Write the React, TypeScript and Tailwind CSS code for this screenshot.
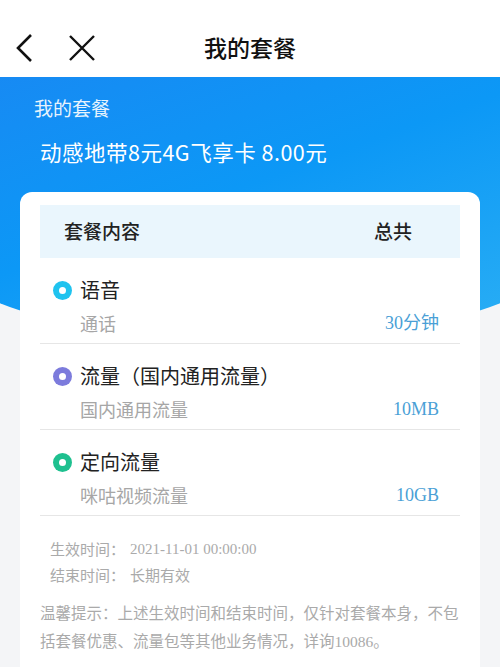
const rows = [
  { title: "语音", sub: "通话", value: "30分钟", dot: "bg-[#1fc3ef]" },
  { title: "流量（国内通用流量）", sub: "国内通用流量", value: "10MB", dot: "bg-[#7c7bdc]" },
  { title: "定向流量", sub: "咪咕视频流量", value: "10GB", dot: "bg-[#1ec08f]" },
];

const serif = "font-['Liberation_Serif','Noto_Sans_CJK_SC',serif]";

export default function App() {
  return (
    <div className="min-h-screen bg-[#f4f5f7] font-['Noto_Sans_CJK_SC','Noto_Sans',sans-serif] overflow-hidden">
      {/* nav bar */}
      <header className="relative flex h-[77px] items-center bg-white pt-[18px]">
        <div className="flex items-center gap-[34px] pl-[14px]">
          <svg width="20" height="30" viewBox="0 0 20 30" fill="none">
            <path d="M17 2 L4 15 L17 28" stroke="#111" strokeWidth="2.6" />
          </svg>
          <svg width="28" height="26" viewBox="0 0 28 26" fill="none">
            <path d="M2 1 L26 25 M26 1 L2 25" stroke="#111" strokeWidth="2.4" />
          </svg>
        </div>
        <h1 className="absolute left-1/2 top-[32px] -translate-x-1/2 text-[23px] leading-[30px] font-medium text-[#111]">
          我的套餐
        </h1>
      </header>

      <main className="relative">
        {/* curved blue backdrop */}
        <div className="absolute left-[-50px] top-0 h-[262px] w-[600px] rounded-b-[50%_80px] bg-[linear-gradient(160deg,#1889f3_0%,#0c98f6_45%,#2cb0f4_100%)]" />

        <div className="relative px-[34px] pt-[18px] text-white">
          <p className="text-[19px] leading-[26px] opacity-90">我的套餐</p>
          <p className="mt-4 pl-[6px] text-[21.5px] leading-[30px] tracking-[0.5px]">动感地带8元4G飞享卡 8.00元</p>
        </div>

        <section className="relative mx-5 mt-[25px] rounded-t-[12px] bg-white px-5 pt-[13px] pb-8">
          <div className="flex h-[53px] items-center justify-between bg-[#eaf6fd] pl-6 pr-[48px] text-[19px] font-medium text-[#222]">
            <span>套餐内容</span>
            <span>总共</span>
          </div>

          {rows.map((r) => (
            <div key={r.title} className="border-b border-[#e6e6e6] pt-[18px] pb-[7px] pl-[13px] pr-[21px]">
              <div className="flex items-center gap-2">
                <span className={`flex h-[19px] w-[19px] items-center justify-center rounded-full ${r.dot}`}>
                  <span className="h-[7px] w-[7px] rounded-full bg-white" />
                </span>
                <span className="text-[20px] leading-[28px] text-[#222]">{r.title}</span>
              </div>
              <div className="mt-[6px] flex items-center justify-between pl-[27px] text-[18px] leading-[26px]">
                <span className="text-[#a6a6a6]">{r.sub}</span>
                <span className={`${serif} text-[#4a9fd6]`}>{r.value}</span>
              </div>
            </div>
          ))}

          <div className="pt-5 pl-[10px] text-[15px] leading-[26px] text-[#aaaaaa]">
            <div className="flex">
              <span className="w-[80px]">生效时间：</span>
              <span className={serif}>2021-11-01 00:00:00</span>
            </div>
            <div className="flex">
              <span className="w-[80px]">结束时间：</span>
              <span>长期有效</span>
            </div>
          </div>
          <p className="mt-[10px] mr-[-10px] text-[15.5px] leading-[28px] text-[#aaaaaa]">
            温馨提示：上述生效时间和结束时间，仅针对套餐本身，不包括套餐优惠、流量包等其他业务情况，详询<span className={serif}>10086</span>。
          </p>
        </section>
      </main>
    </div>
  );
}
